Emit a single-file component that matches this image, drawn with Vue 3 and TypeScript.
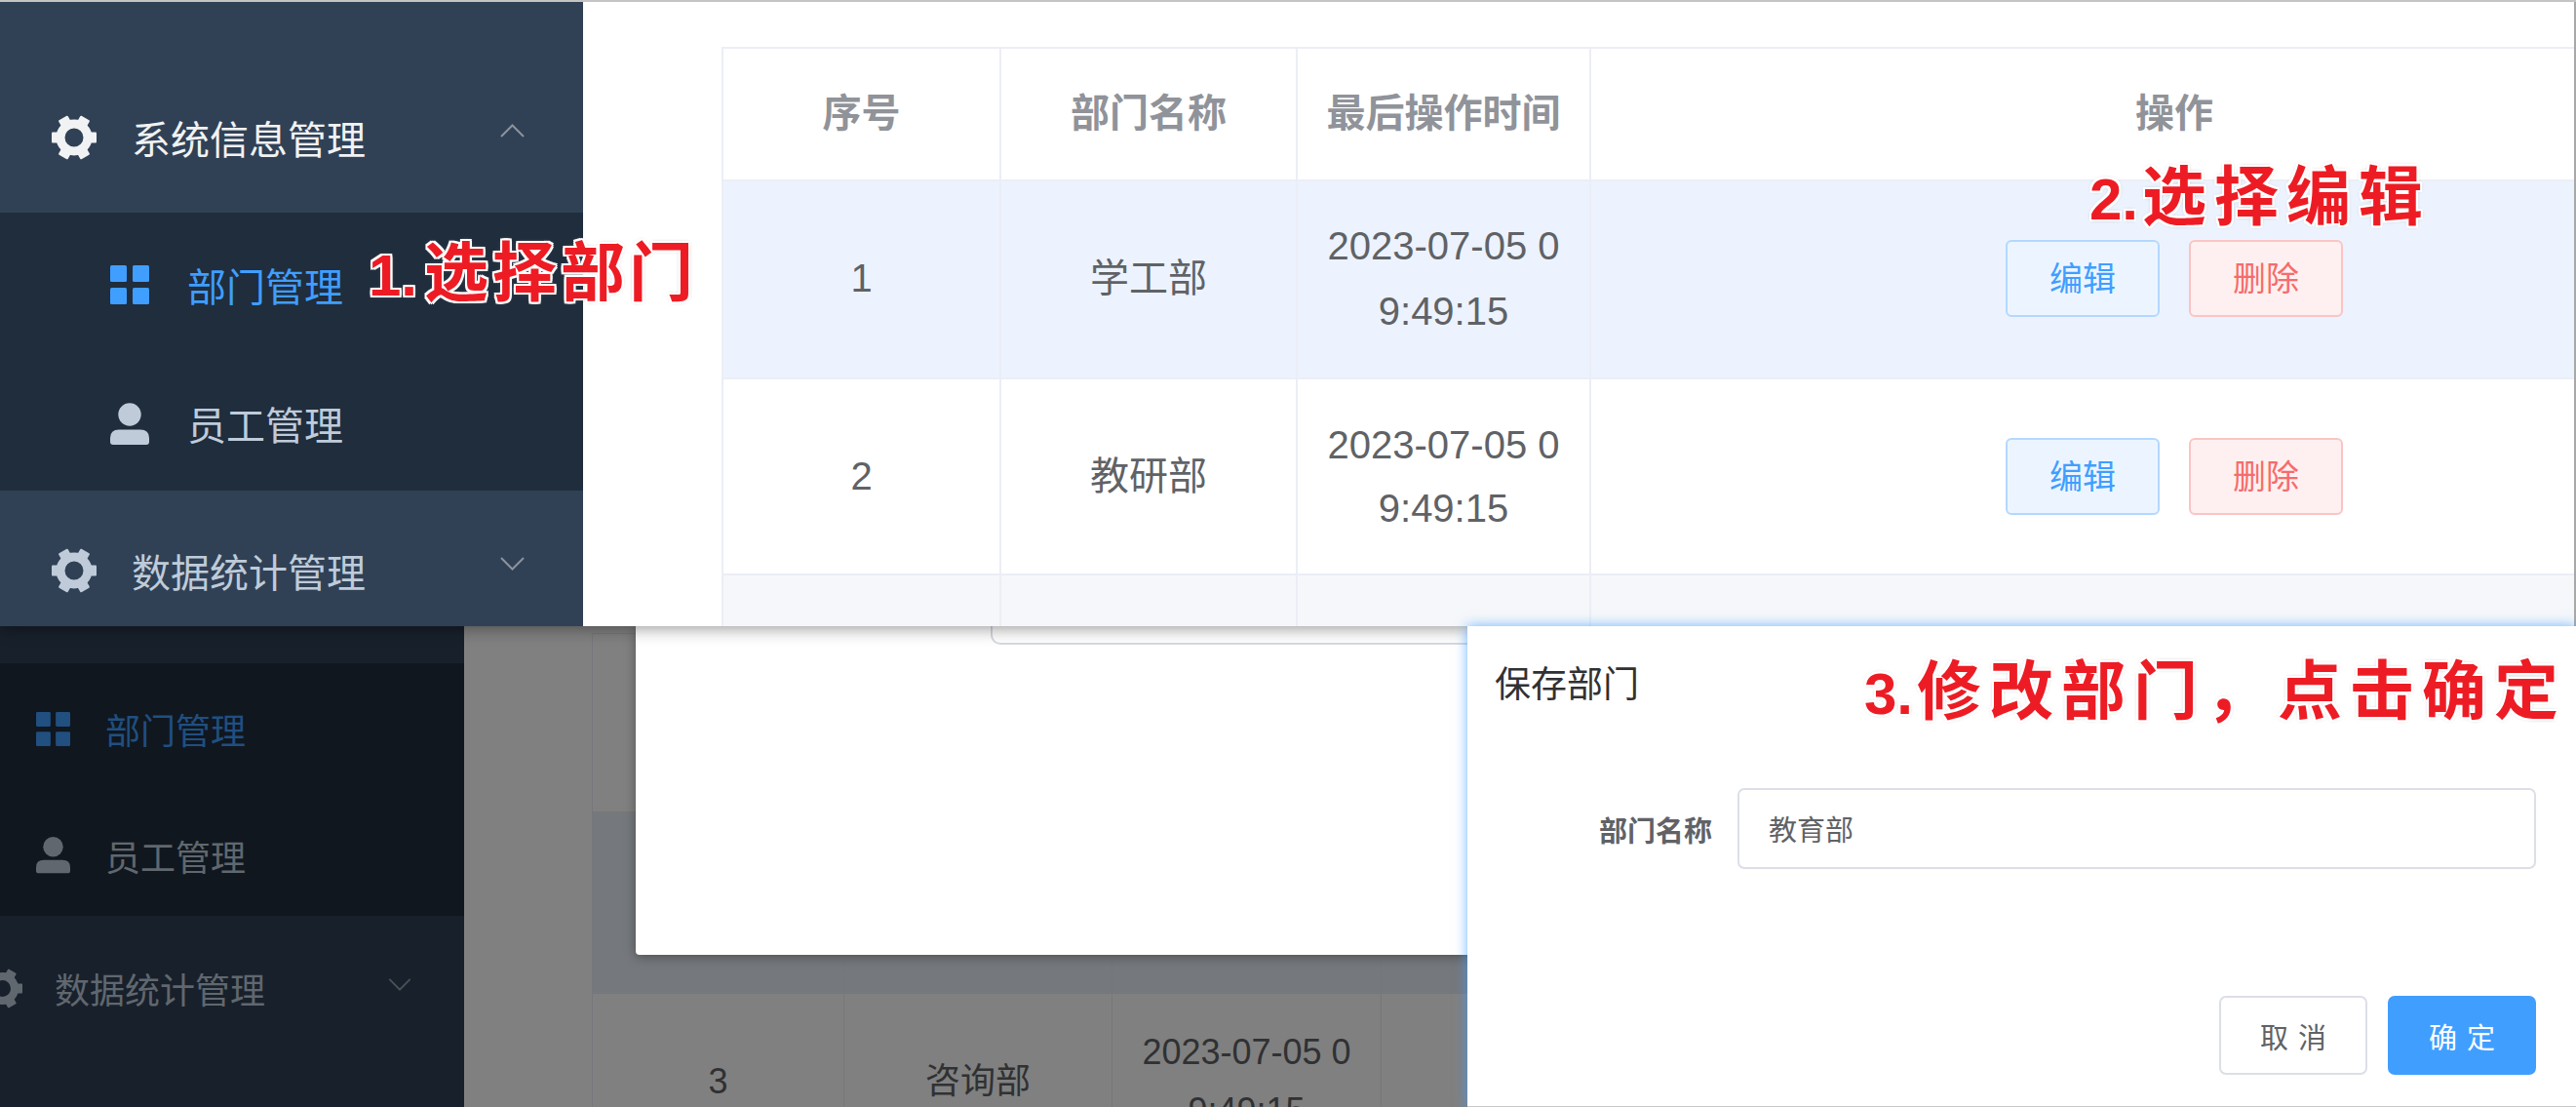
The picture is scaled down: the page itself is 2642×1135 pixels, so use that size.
<script setup lang="ts">
interface Row {
  id: number
  name: string
}

const rows: Row[] = [
  { id: 1, name: '学工部' },
  { id: 2, name: '教研部' },
  { id: 3, name: '咨询部' }
]
const headers = ['序号', '部门名称', '最后操作时间', '操作']
const time = '2023-07-05 09:49:15'
const teeth = [0, 60, 120, 180, 240, 300]
</script>

<template>
  <div class="collage">
    <svg class="defs" aria-hidden="true">
      <symbol id="gear" viewBox="0 0 46 46">
        <rect v-for="a in teeth" :key="a" x="35" y="17.5" width="11" height="11" rx="1" fill="currentColor" :transform="`rotate(${a} 23 23)`" />
        <circle cx="23" cy="23" r="14" fill="none" stroke="currentColor" stroke-width="9" />
      </symbol>
      <symbol id="grid" viewBox="0 0 40 40">
        <rect x="0" y="0" width="17" height="17" rx="1.5" fill="currentColor" />
        <rect x="23" y="0" width="17" height="17" rx="1.5" fill="currentColor" />
        <rect x="0" y="23" width="17" height="17" rx="1.5" fill="currentColor" />
        <rect x="23" y="23" width="17" height="17" rx="1.5" fill="currentColor" />
      </symbol>
      <symbol id="person" viewBox="0 0 40 43">
        <circle cx="20" cy="12" r="11.7" fill="currentColor" />
        <path d="M0 40V36Q0 27.5 9 27.5H31Q40 27.5 40 36V40Q40 43 37 43H3Q0 43 0 40Z" fill="currentColor" />
      </symbol>
    </svg>

    <!-- first screenshot -->
    <section class="shot-top">
      <aside class="side">
        <div class="title first">
          <svg class="gear light"><use href="#gear" /></svg>
          <span class="light">系统信息管理</span>
          <svg class="chev" viewBox="0 0 25 14"><path d="M1 13L12.5 1.5L24 13" /></svg>
        </div>
        <div class="sub">
          <div class="item active">
            <svg class="ico"><use href="#grid" /></svg>
            <span>部门管理</span>
          </div>
          <div class="item">
            <svg class="ico person"><use href="#person" /></svg>
            <span>员工管理</span>
          </div>
        </div>
        <div class="title last">
          <svg class="gear"><use href="#gear" /></svg>
          <span>数据统计管理</span>
          <svg class="chev" viewBox="0 0 25 14"><path d="M1 1L12.5 12.5L24 1" /></svg>
        </div>
      </aside>
      <main class="content">
        <table class="grid-table">
          <colgroup>
            <col class="c1" /><col class="c2" /><col class="c3" /><col class="c4" />
          </colgroup>
          <thead>
            <tr>
              <th v-for="h in headers" :key="h">{{ h }}</th>
            </tr>
          </thead>
          <tbody>
            <tr v-for="r in rows" :key="r.id" :class="`row-${r.id}`">
              <td>{{ r.id }}</td>
              <td>{{ r.name }}</td>
              <td class="time">{{ time }}</td>
              <td>
                <div class="ops">
                  <button class="op edit">编辑</button>
                  <button class="op del">删除</button>
                </div>
              </td>
            </tr>
          </tbody>
        </table>
      </main>
    </section>

    <!-- second screenshot, dimmed behind the dialog -->
    <section class="shot-bottom">
      <aside class="side-dim">
        <div class="band"></div>
        <div class="sub-dim">
          <div class="item-dim active-dim">
            <svg class="ico-dim"><use href="#grid" /></svg>
            <span>部门管理</span>
          </div>
          <div class="item-dim">
            <svg class="ico-dim person-dim"><use href="#person" /></svg>
            <span>员工管理</span>
          </div>
        </div>
        <div class="title-dim">
          <svg class="gear-dim"><use href="#gear" /></svg>
          <span>数据统计管理</span>
          <svg class="chev-dim" viewBox="0 0 25 14"><path d="M1 1L12.5 12.5L24 1" /></svg>
        </div>
      </aside>
      <main class="content-dim">
        <table class="dim-table">
          <colgroup>
            <col class="d1" /><col class="d2" /><col class="d3" /><col class="d4" />
          </colgroup>
          <tbody>
            <tr v-for="r in rows" :key="r.id" :class="`dim-${r.id}`">
              <td>{{ r.id }}</td>
              <td>{{ r.name }}</td>
              <td class="time-dim">{{ time }}</td>
              <td></td>
            </tr>
          </tbody>
        </table>
      </main>

      <div class="old-modal">
        <div class="old-input"></div>
      </div>

      <div class="dialog">
        <div class="dialog-title">保存部门</div>
        <div class="form-row">
          <label class="form-label">部门名称</label>
          <div class="form-input">教育部</div>
        </div>
        <div class="dialog-foot">
          <button class="foot-btn">取消</button>
          <button class="foot-btn primary">确定</button>
        </div>
      </div>
    </section>

    <div class="note note-1"><span class="num">1.</span>选择部门</div>
    <div class="note note-2"><span class="num">2.</span>选择编辑</div>
    <div class="note note-3"><span class="num">3.</span>修改部门，点击确定</div>
  </div>
</template>

<style scoped>
.collage {
  position: relative;
  width: 2642px;
  height: 1135px;
  overflow: hidden;
  display: flex;
  flex-direction: column;
  background: #fff;
  font-family: "Liberation Sans", "Noto Sans CJK SC", sans-serif;
}
.defs {
  position: absolute;
  width: 0;
  height: 0;
}

/* top screenshot */
.shot-top {
  position: relative;
  z-index: 1;
  box-sizing: border-box;
  flex: 0 0 642px;
  height: 642px;
  display: flex;
  overflow: hidden;
  border-top: 2px solid #c4c4c4;
  box-shadow: 0 2px 16px rgba(0, 0, 0, 0.42);
}
.side {
  flex: 0 0 598px;
  background: #304156;
  color: #bfcbd9;
  font-size: 40px;
}
.title {
  box-sizing: border-box;
  display: flex;
  align-items: center;
  padding: 0 60px 0 53px;
}
.title.first {
  height: 216px;
  padding-top: 62px;
}
.title.last {
  height: 164px;
}
.light {
  color: #f1f2f3;
}
.gear {
  width: 46px;
  height: 46px;
  margin-right: 36px;
}
.chev {
  width: 25px;
  height: 14px;
  margin-left: auto;
  margin-bottom: 14px;
  fill: none;
  stroke: #8c939d;
  stroke-width: 2;
}
.sub {
  background: #1f2d3d;
}
.item {
  box-sizing: border-box;
  height: 142.5px;
  padding: 5px 0 0 113px;
  display: flex;
  align-items: center;
}
.item .ico {
  width: 40px;
  height: 40px;
  margin-right: 39px;
}
.item .person {
  height: 43px;
}
.item.active {
  color: #409eff;
}
.content {
  flex: 1;
  min-width: 0;
  padding: 46px 0 0 142px;
  background: #fff;
  overflow: hidden;
  border-right: 2px solid #a8a8a8;
}
.grid-table {
  table-layout: fixed;
  width: 2088px;
  border-collapse: collapse;
  font-size: 40px;
  color: #606266;
  text-align: center;
}
.c1 { width: 285px; }
.c2 { width: 304px; }
.c3 { width: 301px; }
.c4 { width: 1198px; }
.grid-table th,
.grid-table td {
  border: 2px solid #ebeef5;
  padding: 0 24px;
}
.grid-table th {
  height: 126px;
  padding-bottom: 8px;
  color: #909399;
  font-weight: 700;
}
.grid-table td {
  height: 201px;
  line-height: 65px;
}
.grid-table .row-1 td {
  height: 199px;
  line-height: 67px;
  padding-bottom: 2px;
}
.grid-table .row-2 td {
  height: 199px;
}
.grid-table .row-3 td {
  height: 197px;
  padding-bottom: 4px;
}
.time {
  word-break: break-all;
}
.row-1 {
  background: #ecf3fe;
}
.row-3 {
  background: #f5f7fa;
}
.ops {
  display: flex;
  justify-content: center;
  gap: 30px;
}
.op {
  box-sizing: border-box;
  width: 158px;
  height: 79px;
  border-radius: 6px;
  border: 2px solid;
  font: inherit;
  font-size: 34px;
  line-height: 1;
  padding: 0;
}
.edit {
  color: #409eff;
  background: #ecf5ff;
  border-color: #b3d8ff;
}
.del {
  color: #f56c6c;
  background: #fef0f0;
  border-color: #fbc4c4;
}

/* bottom screenshot */
.shot-bottom {
  flex: 1;
  display: flex;
  min-height: 0;
  overflow: visible;
}
.side-dim {
  flex: 0 0 476px;
  display: flex;
  flex-direction: column;
  background: #18202b;
  color: #60676e;
  font-size: 36px;
}
.band {
  height: 38px;
}
.sub-dim {
  background: #10171f;
}
.item-dim {
  box-sizing: border-box;
  height: 129.5px;
  padding: 5px 0 0 37px;
  display: flex;
  align-items: center;
}
.ico-dim {
  width: 35px;
  height: 35px;
  margin-right: 36px;
}
.person-dim {
  height: 39px;
}
.active-dim {
  color: #204f80;
}
.title-dim {
  box-sizing: border-box;
  height: 148px;
  padding: 0 54px 0 0;
  display: flex;
  align-items: center;
}
.gear-dim {
  width: 41px;
  height: 41px;
  margin-left: -18px;
  margin-right: 33px;
}
.chev-dim {
  width: 24px;
  height: 13px;
  margin-left: auto;
  margin-bottom: 7px;
  fill: none;
  stroke: #4c5156;
  stroke-width: 2;
}
.content-dim {
  flex: 1;
  min-width: 0;
  padding: 7px 0 0 131px;
  background: #808080;
  overflow: hidden;
}
.dim-table {
  table-layout: fixed;
  width: 2100px;
  border-collapse: collapse;
  font-size: 36px;
  color: #303133;
  text-align: center;
}
.d1 { width: 258px; }
.d2 { width: 275px; }
.d3 { width: 276px; }
.d4 { width: 1291px; }
.dim-table td {
  border: 1px solid #76777a;
  padding: 0 20px;
  line-height: 60px;
}
.dim-1 td {
  height: 182px;
}
.dim-2 td {
  height: 185px;
}
.dim-3 td {
  height: 180px;
}
.dim-2 {
  background: #75787c;
}
.time-dim {
  word-break: break-all;
}
.old-modal {
  position: absolute;
  left: 652px;
  top: 642px;
  width: 1000px;
  height: 337px;
  background: #fff;
  border-radius: 0 0 4px 4px;
  box-shadow: 0 2px 12px rgba(0, 0, 0, 0.35);
}
.old-input {
  box-sizing: border-box;
  height: 19px;
  margin-left: 364px;
  border: 2px solid #d6d9e0;
  border-top: 0;
  border-radius: 0 0 0 10px;
}
.dialog {
  position: absolute;
  z-index: 2;
  left: 1505px;
  top: 642px;
  right: 0;
  bottom: 0;
  box-sizing: border-box;
  padding: 36px 41px 0 28px;
  background: #fff;
  border-bottom: 1px solid #c8c8c8;
  box-shadow: 0 0 12px rgba(64, 158, 255, 0.75);
}
.dialog-title {
  font-size: 37px;
  line-height: 50px;
  color: #303133;
}
.form-row {
  display: flex;
  align-items: center;
  gap: 26px;
  margin: 80px 0 0 -28px;
}
.form-label {
  width: 251px;
  text-align: right;
  font-size: 29px;
  font-weight: 700;
  color: #606266;
}
.form-input {
  box-sizing: border-box;
  flex: 1;
  height: 83px;
  line-height: 84px;
  padding-left: 30px;
  border: 2px solid #dcdfe6;
  border-radius: 7px;
  font-size: 29px;
  color: #606266;
}
.dialog-foot {
  display: flex;
  justify-content: flex-end;
  gap: 21px;
  margin-top: 130px;
}
.foot-btn {
  box-sizing: border-box;
  width: 152px;
  height: 81px;
  padding: 0 0 0 10px;
  border: 2px solid #dcdfe6;
  border-radius: 7px;
  background: #fff;
  font: inherit;
  font-size: 29px;
  letter-spacing: 10px;
  color: #606266;
}
.primary {
  background: #409eff;
  border-color: #409eff;
  color: #fff;
}

/* red annotations */
.note {
  position: absolute;
  z-index: 3;
  font-size: 66px;
  line-height: 66px;
  font-weight: 700;
  letter-spacing: 8px;
  white-space: nowrap;
  color: #ed1c24;
  text-shadow: 2px 0 0 #fff, -2px 0 0 #fff, 0 2px 0 #fff, 0 -2px 0 #fff, 2px 2px 0 #fff, -2px 2px 0 #fff, 2px -2px 0 #fff, -2px -2px 0 #fff, 0 0 4px #999;
}
.num {
  font-size: 60px;
  letter-spacing: 0;
  margin-right: 4px;
}
.note-1 {
  left: 378px;
  top: 247px;
  letter-spacing: 4px;
}
.note-2 {
  left: 2143px;
  top: 169px;
}
.note-3 {
  left: 1912px;
  top: 676px;
}
.note-1 .num {
  letter-spacing: 0;
  margin-right: 7px;
}
</style>

<style>
html,
body {
  margin: 0;
  overflow: hidden;
}
</style>
